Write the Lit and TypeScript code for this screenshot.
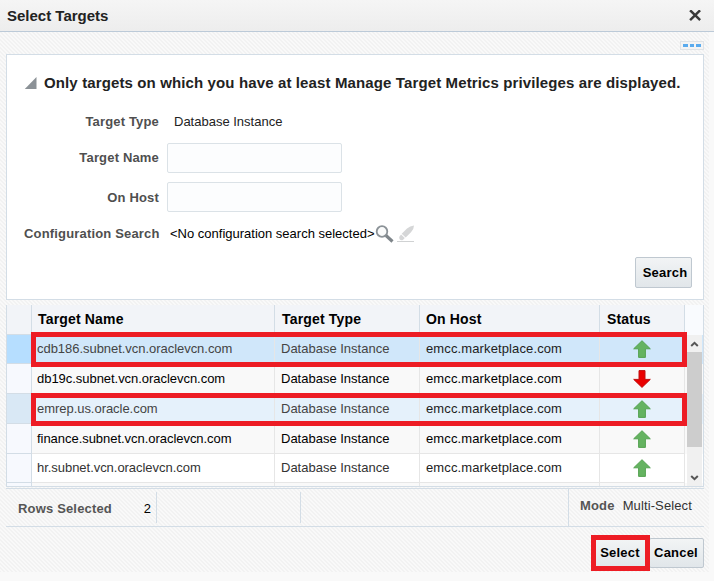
import { LitElement, html, css, svg } from "lit";
import { customElement } from "lit/decorators.js";
import { classMap } from "lit/directives/class-map.js";

interface Target {
  name: string;
  up: boolean;
  tone: string;
}

const targets: Target[] = [
  { name: "cdb186.subnet.vcn.oraclevcn.com", up: true, tone: "picked" },
  { name: "db19c.subnet.vcn.oraclevcn.com", up: false, tone: "odd" },
  { name: "emrep.us.oracle.com", up: true, tone: "hovered" },
  { name: "finance.subnet.vcn.oraclevcn.com", up: true, tone: "odd" },
  { name: "hr.subnet.vcn.oraclevcn.com", up: true, tone: "even" },
];

const arrow = (up: boolean) => html`<svg class="arrow" width="18" height="18" viewBox="0 0 18 18">
  ${up
    ? svg`<path d="M9 .7L17.3 8.8H12.4V17.4H5.6V8.8H.7Z" fill="#65b361" stroke="#55a352" stroke-width="1"/>`
    : svg`<path d="M9 17.4L17.3 9.4H12V.6H6V9.4H.7Z" fill="#ea0000" stroke="#c01010" stroke-width="1"/>`}
</svg>`;

@customElement("app-root")
export class AppRoot extends LitElement {
  static styles = css`
    :host {
      display: block;
      position: relative;
      width: 714px;
      height: 581px;
      overflow: hidden;
      background: #f9f9f9;
      color: #000;
      font: 13px/16px "Liberation Sans", Arial, sans-serif;
      white-space: nowrap;
    }
    * { box-sizing: border-box; }
    svg { display: block; flex: none; }
    .title {
      display: flex;
      align-items: center;
      justify-content: space-between;
      height: 32px;
      padding: 0 13px 0 7px;
      border-bottom: 1px solid #bccad8;
      background: linear-gradient(#f5f5f5, #ededed);
      color: #222;
      font-size: 15px;
      font-weight: bold;
    }
    .body {
      width: 709px;
      height: 540px;
      padding: 0 5px 0 6px;
      background: repeating-linear-gradient(45deg, #f2f2f2 0 0.9px, #f9f9f9 1.4px 2.3px, #f2f2f2 2.828px);
    }
    .strip {
      display: flex;
      justify-content: flex-end;
      height: 22px;
      padding-top: 9px;
    }
    .dots {
      display: flex;
      gap: 2px;
      width: 24px;
      height: 9px;
      padding: 2px;
      border: 1px solid #dfe3e7;
      background: #f4f4f4;
    }
    .dot { width: 5px; height: 3px; background: #5aabee; }
    .panel {
      height: 246px;
      border: 1px solid #d3dde6;
      background: #fff;
      padding: 17px 11px 11px 17px;
    }
    .heading {
      display: flex;
      align-items: center;
      height: 22px;
      gap: 7px;
      color: #222;
      font-size: 15px;
      font-weight: bold;
      letter-spacing: 0.125px;
    }
    .field { display: flex; align-items: center; }
    .label {
      width: 135px;
      text-align: right;
      font-weight: bold;
      letter-spacing: 0.17px;
      color: #4f4f4f;
    }
    .type { height: 16px; margin-top: 20px; }
    .type .value { margin-left: 15px; color: #222; }
    .name { height: 30px; margin-top: 13px; }
    .host { height: 30px; margin-top: 9px; }
    .host .label { padding-top: 1px; }
    .input {
      width: 175px;
      height: 30px;
      margin-left: 8px;
      border: 1px solid #dbe2e7;
      border-radius: 2px;
      background: #fcfdfe;
    }
    .conf { height: 20px; margin-top: 12px; }
    .conf .value { margin-left: 11px; width: 205px; }
    .actions { display: flex; justify-content: flex-end; margin-top: 13px; }
    .btn {
      display: flex;
      align-items: center;
      justify-content: center;
      height: 31px;
      border: 1px solid #bfc8d0;
      border-radius: 2px;
      background: linear-gradient(#f2f4f5, #e1e6ea);
      font-size: 13px;
      letter-spacing: 0.2px;
      font-weight: bold;
    }
    .search { width: 57px; padding-left: 3px; }
    .table {
      position: relative;
      width: 698px;
      height: 182px;
      margin-top: 5px;
      border: 1px solid #d3dde6;
      border-top: 0;
      background: #f9f9f9;
      overflow: hidden;
    }
    .row {
      display: grid;
      grid-template-columns: 25px 243px 145px 180px 85px 18px;
      width: 696px;
      height: 30px;
    }
    .row.short { height: 29px; }
    .cell {
      display: flex;
      align-items: center;
      padding: 0 0 0 6px;
      border-right: 1px solid #e6e6e6;
      border-bottom: 1px solid #e6e6e6;
    }
    .first { padding-left: 5px; letter-spacing: -0.04px; }
    .gut { background: #f7f9fe; border-color: #d3dde6; }
    .center { justify-content: center; padding: 0; }
    .end { border: 0; }
    .head { height: 30px; font-size: 14px; font-weight: bold; }
    .head .cell { background: #f2f4f8; border-color: #d3dde6; padding: 0 0 2px 7px; letter-spacing: 0.17px; }
    .head .first { padding-left: 6px; }
    .head .near { padding-left: 6px; }
    .head .end { background: #f9fbfe; border: 0; }
    .even .cell { background: #fff; color: #333; }
    .picked .cell { background: #d0e7fa; color: #444; }
    .hovered .cell { background: #e5f1fb; color: #444; }
    .row .gut.cell { background: #f7f9fe; }
    .picked .gut.cell { background: #b6deff; }
    .hovered .gut.cell { background: #d9e8f5; }
    .head .gut.cell { background: #f2f4f8; }
    .row .hostname { color: #222; letter-spacing: 0.12px; }
    .odd .hostname { color: #000; }
    .scroll {
      position: absolute;
      right: 1px;
      top: 30px;
      width: 15px;
      height: 151px;
      display: flex;
      flex-direction: column;
      justify-content: space-between;
      background: #f0f0f0;
    }
    .thumb { height: 95px; background: #cdcdcd; margin-bottom: 22px; }
    .footer {
      display: flex;
      height: 39px;
      margin-top: 1px;
      width: 698px;
      border-top: 1px solid #d3dde6;
      border-bottom: 1px solid #d3dde6;
    }
    .part { display: flex; align-items: center; height: 31px; margin-top: 3px; border-right: 1px solid #d3dde6; }
    .count { width: 151px; padding: 3px 5px 0 12px; justify-content: space-between; }
    .blank { width: 144px; }
    .mode {
      flex: none;
      display: flex;
      align-items: flex-start;
      gap: 8px;
      width: 136px;
      margin-left: auto;
      padding: 9px 0 0 11px;
      border-left: 1px solid #d3dde6;
      color: #333;
      letter-spacing: 0.12px;
    }
    .strong { font-weight: bold; color: #555; letter-spacing: 0.17px; }
    .buttons { display: flex; justify-content: flex-end; margin-top: 11px; height: 30px; }
    .buttons .btn { height: 30px; }
    .buttons .select { width: 57px; border-color: #e1e6ea; padding-right: 1px; }
    .buttons .cancel { width: 55px; padding-right: 1px; }
    .mark { position: absolute; border: 5px solid #ed1c24; }
    .mark1 { left: 31px; top: 332px; width: 656px; height: 35px; }
    .mark2 { left: 31px; top: 393px; width: 656px; height: 33px; }
    .mark3 { left: 591px; top: 535px; width: 59px; height: 36px; }
  `;

  render() {
    return html`
      <div class="title">
        <span>Select Targets</span>
        <svg width="12" height="12" viewBox="0 0 12 12"><path d="M2 1.2L10.2 9.2M10.2 1.2L2 9.2" stroke="#3a3a3a" stroke-width="2.5" stroke-linecap="square"/></svg>
      </div>
      <div class="body">
        <div class="strip"><div class="dots"><i class="dot"></i><i class="dot"></i><i class="dot"></i></div></div>
        <div class="panel">
          <div class="heading">
            <svg width="13" height="13" viewBox="0 0 13 13"><path d="M12.5 0V12H.8Z" fill="#8b9196"/></svg>
            <span>Only targets on which you have at least Manage Target Metrics privileges are displayed.</span>
          </div>
          <div class="field type"><span class="label">Target Type</span><span class="value">Database Instance</span></div>
          <div class="field name"><span class="label">Target Name</span><div class="input"></div></div>
          <div class="field host"><span class="label">On Host</span><div class="input"></div></div>
          <div class="field conf">
            <span class="label">Configuration Search</span><span class="value">&lt;No configuration search selected&gt;</span>
            <svg width="19" height="18" viewBox="0 0 19 18"><circle cx="7" cy="6.5" r="5.3" fill="#fafbfb" stroke="#8b9297" stroke-width="1.8"/><path d="M11 10.5L17.5 16.5" stroke="#7e858a" stroke-width="3.1"/></svg>
            <svg width="22" height="18" viewBox="0 0 22 18"><path d="M20 .5Q20 4 17 7.3L11.7 12.4L7.7 8.7L13 3.4Q16 1 20 .5ZM7.1 9.6L10.8 13.1L8.9 14.9Q7 15.6 5.8 14.5Q4.8 13.1 5.3 11.8Z" fill="#d5d6d7"/><path d="M3 16.5H20" stroke="#d0d2d3"/></svg>
          </div>
          <div class="actions"><div class="btn search">Search</div></div>
        </div>
        <div class="table">
          <div class="row head">
            <div class="cell gut"></div><div class="cell first">Target Name</div><div class="cell">Target Type</div>
            <div class="cell near">On Host</div><div class="cell">Status</div><div class="cell end"></div>
          </div>
          ${targets.map(
            (t, i) => html`<div class=${classMap({ row: true, short: i === 0 || i === 4, [t.tone]: true })}>
              <div class="cell gut"></div><div class="cell first">${t.name}</div><div class="cell">Database Instance</div>
              <div class="cell hostname">emcc.marketplace.com</div><div class="cell center">${arrow(t.up)}</div><div class="cell end"></div>
            </div>`
          )}
          <div class="row"><div class="cell gut"></div><div class="cell"></div><div class="cell"></div><div class="cell"></div><div class="cell"></div></div>
          <div class="scroll">
            <svg width="15" height="17" viewBox="0 0 15 17"><path d="M4.2 11L7.5 7.8L10.8 11" fill="none" stroke="#555" stroke-width="2"/></svg>
            <div class="thumb"></div>
            <svg width="15" height="17" viewBox="0 0 15 17"><path d="M4.2 7L7.5 10.2L10.8 7" fill="none" stroke="#555" stroke-width="2"/></svg>
          </div>
        </div>
        <div class="footer">
          <div class="part count"><span class="strong">Rows Selected</span><span>2</span></div>
          <div class="part blank"></div>
          <div class="mode"><span class="strong">Mode</span><span>Multi-Select</span></div>
        </div>
        <div class="buttons"><div class="btn select">Select</div><div class="btn cancel">Cancel</div></div>
      </div>
      <div class="mark mark1"></div>
      <div class="mark mark2"></div>
      <div class="mark mark3"></div>
    `;
  }
}
